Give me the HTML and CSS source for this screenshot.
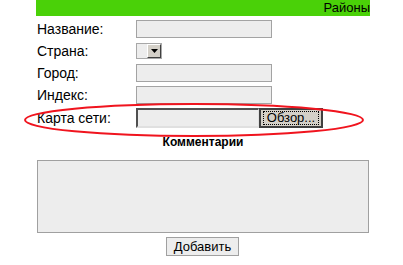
FILE: index.html
```html
<!DOCTYPE html>
<html>
<head>
<meta charset="utf-8">
<link rel="stylesheet" href="styles.css">
</head>
<body>
<div class="page">
  <div class="header">Районы</div>
  <div class="form">
    <div class="row"><span class="label">Название:</span><span class="field input"></span></div>
    <div class="row"><span class="label">Страна:</span><span class="select"><span class="sel-text"></span><span class="sel-btn"><svg width="7" height="4" viewBox="0 0 7 4"><path d="M0 0H7L3.5 4Z" fill="#000"/></svg></span></span></div>
    <div class="row"><span class="label">Город:</span><span class="field input"></span></div>
    <div class="row"><span class="label">Индекс:</span><span class="field input"></span></div>
    <div class="row row-file"><span class="label">Карта сети:</span><span class="file"><span class="file-text"></span><span class="file-btn"><span class="focus">Обзор...</span></span></span></div>
  </div>
  <div class="comments-title">Комментарии</div>
  <div class="textarea"></div>
  <div class="actions"><span class="btn">Добавить</span></div>
  <svg class="ellipse" width="403" height="60" viewBox="0 0 403 60"><ellipse cx="194" cy="30" rx="169" ry="16" fill="none" stroke="#f0141e" stroke-width="2"/></svg>
</div>
</body>
</html>
```
FILE: styles.css
```css
html, body { margin: 0; padding: 0; background: #fff; }
body { font-family: "Liberation Sans", Arial, sans-serif; font-size: 13px; color: #000; }
.page { position: relative; width: 403px; height: 265px; }
.header { margin-left: 36px; width: 334px; height: 16px; line-height: 16px; background: #4ad108; text-align: right; font-size: 13px; }
.form { margin-left: 37px; padding-top: 2px; }
.row { display: flex; align-items: center; height: 22px; }
.row-file { height: 24px; }
.label { width: 99px; color: #000; font-size: 14px; }
.input { display: block; width: 134px; height: 16px; background: #ededed; border: 1px solid #a3a3a3; }
.select { display: flex; width: 24px; height: 14px; border: 1px solid #a8a8a8; background: #ededed; }
.sel-text { flex: 1; }
.sel-btn { width: 12px; height: 12px; background: #d4d0c8; border-top: 1px solid #fff; border-left: 1px solid #fff; border-right: 1px solid #404040; border-bottom: 1px solid #404040; display: flex; align-items: center; justify-content: center; }
.file { display: flex; height: 20px; }
.file-text { width: 120px; height: 16px; background: #ededed; border-top: 2px solid #505050; border-left: 2px solid #505050; border-bottom: 2px solid #e0e0e0; border-right: 1px solid #e0e0e0; }
.file-btn { width: 60px; height: 16px; background: #d4d0c8; border: 2px solid #404040; display: flex; align-items: center; justify-content: center; }
.focus { border: 1px dotted #000; padding: 0 3px; line-height: 12px; height: 12px; }
.comments-title { text-align: center; width: 406px; margin-top: 4px; font-weight: bold; font-size: 12px; line-height: 16px; }
.textarea { margin: 10px 0 0 37px; width: 330px; height: 71px; background: #ededed; border: 1px solid #a0a0a0; }
.actions { display: flex; justify-content: center; width: 405px; margin-top: 4px; }
.btn { display: block; width: 71px; height: 17px; line-height: 17px; text-align: center; background: #ededed; border: 1px solid #a0a0a0; }
.ellipse { position: absolute; left: 0; top: 90px; }
```
